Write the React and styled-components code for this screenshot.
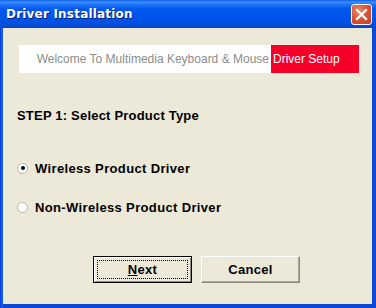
import React from "react";
import styled, { createGlobalStyle } from "styled-components";

const Global = createGlobalStyle`
  html, body { margin: 0; padding: 0; background: #ece9d8; }
  * { box-sizing: border-box; }
`;

const Window = styled.div`
  width: 376px;
  height: 308px;
  display: flex;
  flex-direction: column;
  background: linear-gradient(to right, #0831d9 0, #166aee 2px, #0b48d8 3px);
  overflow: hidden;
`;

const TitleBar = styled.div`
  height: 28px;
  flex: none;
  display: flex;
  align-items: center;
  justify-content: space-between;
  padding: 0 4px 0 6px;
  background: linear-gradient(
    to bottom,
    #0a5ee6 0px,
    #3d8ffc 2px,
    #1c6ff8 5px,
    #0058ee 9px,
    #0055eb 16px,
    #0052e6 22px,
    #0a4bd4 26px,
    #0840c0 28px
  );
`;

const Title = styled.span`
  font-family: "DejaVu Sans", "Liberation Sans", sans-serif;
  font-weight: bold;
  font-size: 12px;
  color: #fff;
  text-shadow: 1px 1px 0 #0a1e6e;
  letter-spacing: 0.2px;
`;

const CloseButton = styled.div`
  width: 21px;
  height: 21px;
  border: 1px solid #fff;
  border-radius: 3px;
  background: radial-gradient(circle at 35% 30%, #eb8a6c 0%, #d9583a 45%, #c23a1c 100%);
  display: flex;
  align-items: center;
  justify-content: center;
`;

const Client = styled.div`
  flex: 1;
  margin: 0 4px 4px 3px;
  background: #ece9d8;
  display: flex;
  flex-direction: column;
  padding: 17px 0 0 14px;
`;

const Banner = styled.div`
  display: flex;
  height: 28px;
  width: 340px;
  margin-left: 2px;
`;

const BannerWhite = styled.div`
  width: 252px;
  background: #fff;
  display: flex;
  align-items: center;
  justify-content: flex-end;
  padding-right: 2px;
  font-family: "Liberation Sans", Arial, sans-serif;
  font-size: 12px;
  color: #8c8c8c;
  white-space: nowrap;
`;

const BannerRed = styled.div`
  width: 88px;
  background: #f40028;
  display: flex;
  align-items: center;
  padding-left: 2px;
  font-family: "Liberation Sans", Arial, sans-serif;
  font-size: 12px;
  color: #fff;
  white-space: nowrap;
`;

const StepHeading = styled.div`
  margin-top: 35px;
  font-family: "Liberation Sans", Arial, sans-serif;
  font-weight: bold;
  font-size: 13px;
  letter-spacing: 0.2px;
  color: #000;
  height: 16px;
  line-height: 16px;
`;

const RadioRow = styled.label`
  display: flex;
  align-items: center;
  gap: 7px;
  margin-top: ${(p) => p.$top}px;
  height: 18px;
  font-family: "Liberation Sans", Arial, sans-serif;
  font-weight: bold;
  font-size: 13px;
  letter-spacing: 0.35px;
  color: #000;
`;

const RadioCircle = styled.span`
  width: 11px;
  height: 11px;
  border-radius: 50%;
  border: 1px solid #b8b4a8;
  background: #fff;
  display: flex;
  align-items: center;
  justify-content: center;
  flex: none;
  &::after {
    content: "";
    width: 4px;
    height: 4px;
    border-radius: 50%;
    background: ${(p) => (p.$checked ? "#000" : "transparent")};
  }
`;

const ButtonRow = styled.div`
  display: flex;
  gap: 9px;
  margin-top: 40px;
  margin-left: 76px;
`;

const Button = styled.div`
  width: 99px;
  height: 27px;
  background: #ece9d8;
  border: 1px solid ${(p) => (p.$default ? "#000" : "#8c8a80")};
  border-top-color: ${(p) => (p.$default ? "#000" : "#fff")};
  border-left-color: ${(p) => (p.$default ? "#000" : "#fff")};
  box-shadow: ${(p) =>
    p.$default
      ? "inset 1px 1px 0 #fff, inset -1px -1px 0 #8c8a80"
      : "inset -1px -1px 0 #aca899"};
  display: flex;
  align-items: center;
  justify-content: center;
  padding: 3px;
  font-family: "Liberation Sans", Arial, sans-serif;
  font-weight: bold;
  font-size: 13px;
  letter-spacing: 0.3px;
  color: #000;
`;

const FocusRect = styled.div`
  width: 100%;
  height: 100%;
  border: 1px dotted #000;
  display: flex;
  align-items: center;
  justify-content: center;
`;

const Underlined = styled.span`
  text-decoration: underline;
`;

export default function App() {
  return (
    <>
      <Global />
      <Window>
        <TitleBar>
          <Title>Driver Installation</Title>
          <CloseButton>
            <svg width="13" height="13" viewBox="0 0 13 13">
              <path d="M2 2 L11 11 M11 2 L2 11" stroke="#fff" strokeWidth="2.2" strokeLinecap="square" />
            </svg>
          </CloseButton>
        </TitleBar>
        <Client>
          <Banner>
            <BannerWhite>Welcome To Multimedia Keyboard &amp; Mouse</BannerWhite>
            <BannerRed>Driver Setup</BannerRed>
          </Banner>
          <StepHeading>STEP 1: Select Product Type</StepHeading>
          <RadioRow $top={35}>
            <RadioCircle $checked />
            Wireless Product Driver
          </RadioRow>
          <RadioRow $top={21}>
            <RadioCircle />
            Non-Wireless Product Driver
          </RadioRow>
          <ButtonRow>
            <Button $default>
              <FocusRect>
                <span>
                  <Underlined>N</Underlined>ext
                </span>
              </FocusRect>
            </Button>
            <Button>Cancel</Button>
          </ButtonRow>
        </Client>
      </Window>
    </>
  );
}
